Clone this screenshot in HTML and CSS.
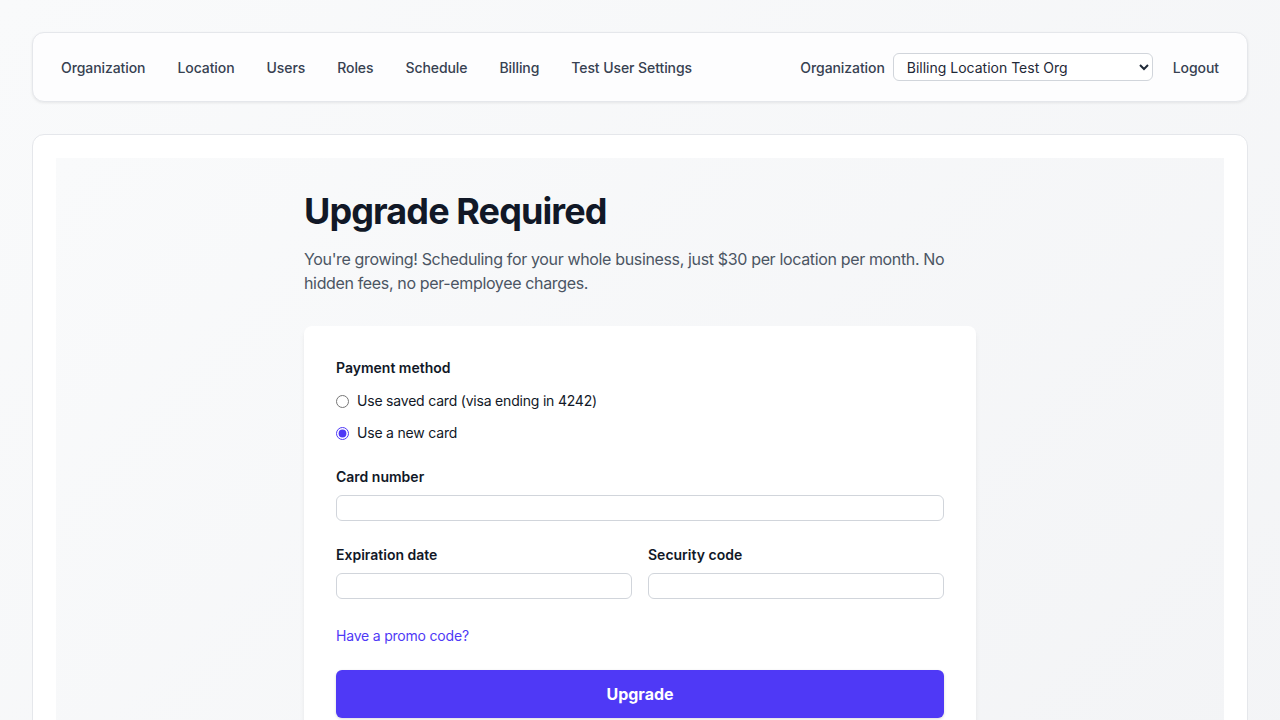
FILE: index.html
```html
<!DOCTYPE html>
<html lang="en">
<head>
    <meta charset="UTF-8">
    <meta name="viewport" content="width=device-width, initial-scale=1.0">
    <title>Billing - Upgrade Required</title>
    <link rel="stylesheet" href="styles.css">
</head>
<body>
    <div class="page">
        <nav class="navbar">
            <ul class="nav-links">
                <li><a href="#">Organization</a></li>
                <li><a href="#">Location</a></li>
                <li><a href="#">Users</a></li>
                <li><a href="#">Roles</a></li>
                <li><a href="#">Schedule</a></li>
                <li><a href="#">Billing</a></li>
                <li><a href="#">Test User Settings</a></li>
            </ul>
            <div class="nav-right">
                <label class="org-label" for="org-select">Organization</label>
                <select id="org-select" class="org-select">
                    <option>Billing Location Test Org</option>
                </select>
                <a href="#" class="logout">Logout</a>
            </div>
        </nav>

        <main class="main-card">
            <div class="main-inner">
                <div class="content">
                    <h1 class="title">Upgrade Required</h1>
                    <p class="lead">You're growing! Scheduling for your whole business, just $30 per location per month. No hidden fees, no per-employee charges.</p>

                    <form class="pay-card" onsubmit="return false;">
                        <div class="field-label">Payment method</div>
                        <div class="radio-list">
                            <label class="radio-row">
                                <input type="radio" name="method" value="saved">
                                <span>Use saved card (visa ending in 4242)</span>
                            </label>
                            <label class="radio-row">
                                <input type="radio" name="method" value="new" checked>
                                <span>Use a new card</span>
                            </label>
                        </div>

                        <div class="field">
                            <label class="field-label" for="card-number">Card number</label>
                            <input id="card-number" class="text-input" type="text">
                        </div>

                        <div class="field-row">
                            <div class="field">
                                <label class="field-label" for="exp">Expiration date</label>
                                <input id="exp" class="text-input" type="text">
                            </div>
                            <div class="field">
                                <label class="field-label" for="cvc">Security code</label>
                                <input id="cvc" class="text-input" type="text">
                            </div>
                        </div>

                        <a href="#" class="promo-link">Have a promo code?</a>

                        <button type="submit" class="upgrade-btn">Upgrade</button>
                    </form>
                </div>
            </div>
        </main>
    </div>
</body>
</html>
```

FILE: styles.css
```css
* {
    margin: 0;
    padding: 0;
    box-sizing: border-box;
}

body {
    font-family: Inter, "Noto Sans", sans-serif;
    background: linear-gradient(135deg, #f9fafb, #f3f4f6);
    color: #111827;
    min-height: 100vh;
}

a {
    text-decoration: none;
}

.page {
    padding: 32px;
}

/* top navigation */
.navbar {
    display: flex;
    align-items: center;
    justify-content: space-between;
    height: 70px;
    padding: 0 28px;
    background: #fdfdfe;
    border: 1px solid #e5e7eb;
    border-radius: 12px;
    box-shadow: 0 1px 3px rgba(0,0,0,0.08);
    margin-bottom: 32px;
}

.nav-links {
    display: flex;
    list-style: none;
    gap: 32px;
}

.nav-links a,
.org-label,
.logout {
    font-size: 14px;
    font-weight: 500;
    color: #374151;
    letter-spacing: -0.08px;
}

.nav-right {
    display: flex;
    align-items: center;
}

.org-select {
    width: 260px;
    height: 28px;
    margin-left: 8px;
    margin-right: 20px;
    padding: 0 8px 0 9px;
    font-family: Inter, sans-serif;
    font-size: 14px;
    color: #1f2937;
    background: #fff;
    border: 1px solid #d1d5db;
    border-radius: 6px;
}

/* main panel */
.main-card {
    background: #fff;
    border: 1px solid #e5e7eb;
    border-radius: 12px;
    padding: 23px;
}

.main-inner {
    background: linear-gradient(135deg, #f9fafb, #f3f4f6);
    padding: 33px 0 40px;
    min-height: 600px;
}

.content {
    max-width: 672px;
    margin: 0 auto;
}

.title {
    font-size: 36px;
    line-height: 40px;
    font-weight: 700;
    color: #111827;
    letter-spacing: -0.9px;
}

.lead {
    margin-top: 16px;
    font-size: 16px;
    line-height: 24px;
    color: #4b5563;
    letter-spacing: -0.35px;
}

/* payment form */
.pay-card {
    margin-top: 31px;
    background: #fff;
    border-radius: 8px;
    padding: 32px;
    box-shadow: 0 4px 6px -1px rgba(0,0,0,0.08), 0 2px 4px -2px rgba(0,0,0,0.06);
}

.field-label {
    display: block;
    font-size: 14px;
    line-height: 20px;
    font-weight: 600;
    color: #111827;
}

.radio-list {
    display: flex;
    flex-direction: column;
    gap: 12px;
    margin-top: 13px;
}

.radio-row {
    display: flex;
    align-items: center;
    gap: 8px;
    font-size: 14px;
    line-height: 20px;
    color: #111827;
    letter-spacing: -0.2px;
}

.radio-row input {
    margin: 0;
    width: 13px;
    height: 13px;
    accent-color: #4f39f6;
}

.field {
    margin-top: 24px;
}

.field .field-label {
    margin-bottom: 8px;
}

.text-input {
    display: block;
    width: 100%;
    height: 26px;
    border: 1px solid #d1d5db;
    border-radius: 6px;
    background: #fff;
    padding: 0 10px;
    font-family: Inter, sans-serif;
    font-size: 14px;
}

.field-row {
    display: grid;
    grid-template-columns: 1fr 1fr;
    gap: 16px;
}

.promo-link {
    display: block;
    margin-top: 27px;
    font-size: 14px;
    line-height: 20px;
    color: #4f39f6;
    letter-spacing: -0.2px;
}

.upgrade-btn {
    display: block;
    width: 100%;
    height: 48px;
    margin-top: 24px;
    background: #4f39f6;
    color: #fff;
    border: none;
    border-radius: 6px;
    font-family: Inter, sans-serif;
    font-size: 16px;
    font-weight: 700;
    cursor: pointer;
    box-shadow: 0 1px 3px rgba(0,0,0,0.15);
}

.upgrade-btn:hover {
    background: #432dd7;
}
```
